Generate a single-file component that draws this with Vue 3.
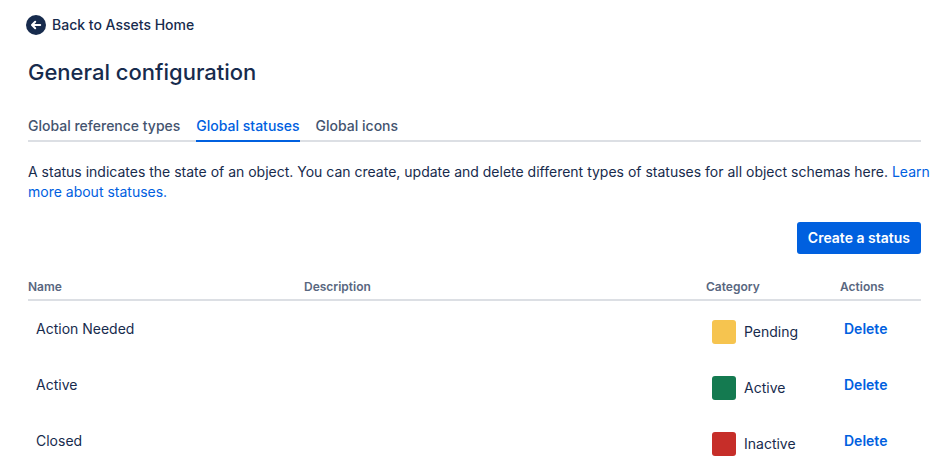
<script setup>
import { ref } from 'vue'

const tabs = ['Global reference types', 'Global statuses', 'Global icons']
const activeTab = ref('Global statuses')

const statuses = ref([
  { name: 'Action Needed', description: '', category: 'Pending' },
  { name: 'Active', description: '', category: 'Active' },
  { name: 'Closed', description: '', category: 'Inactive' }
])

function removeStatus(index) {
  statuses.value.splice(index, 1)
}
</script>

<template>
  <main class="page">
    <a class="back" href="#">
      <svg class="back-icon" width="20" height="20" viewBox="0 0 20 20" aria-hidden="true">
        <circle cx="10" cy="10" r="10" fill="#172b4d" />
        <path
          d="M14.2 10H6.2M9.2 6.8L6 10l3.2 3.2"
          fill="none"
          stroke="#fff"
          stroke-width="2"
          stroke-linecap="round"
          stroke-linejoin="round"
        />
      </svg>
      <span>Back to Assets Home</span>
    </a>

    <h1>General configuration</h1>

    <div class="tabs" role="tablist">
      <button
        v-for="tab in tabs"
        :key="tab"
        class="tab"
        :class="{ active: tab === activeTab }"
        type="button"
        role="tab"
        :aria-selected="tab === activeTab"
        @click="activeTab = tab"
      >
        {{ tab }}
      </button>
    </div>

    <p class="intro">
      A status indicates the state of an object. You can create, update and delete different types
      of statuses for all object schemas here.
      <a href="#">Learn more about statuses.</a>
    </p>

    <div class="toolbar">
      <button class="create" type="button">Create a status</button>
    </div>

    <table>
      <thead>
        <tr>
          <th class="col-name">Name</th>
          <th class="col-description">Description</th>
          <th class="col-category">Category</th>
          <th class="col-actions">Actions</th>
        </tr>
      </thead>
      <tbody>
        <tr v-for="(status, index) in statuses" :key="status.name">
          <td class="name">{{ status.name }}</td>
          <td>{{ status.description }}</td>
          <td>
            <div class="category">
              <span class="swatch" :class="status.category.toLowerCase()"></span>
              <span>{{ status.category }}</span>
            </div>
          </td>
          <td class="actions">
            <button class="delete" type="button" @click="removeStatus(index)">Delete</button>
          </td>
        </tr>
      </tbody>
    </table>
  </main>
</template>

<style>
body {
  background: #fff;
}
</style>

<style scoped>
.page {
  padding: 15px 26px 0 28px;
  font-family: Inter, "Liberation Sans", sans-serif;
  font-size: 14px;
  line-height: 20px;
  color: #172b4d;
}

a {
  color: #0060df;
  text-decoration: none;
}

button {
  font-family: inherit;
  font-size: 14px;
  line-height: 20px;
  border: none;
  background: none;
  cursor: pointer;
}

.back {
  display: flex;
  align-items: center;
  gap: 6px;
  margin-left: -2px;
  width: fit-content;
  font-weight: 500;
  color: #172b4d;
}

h1 {
  margin: 23px 0 0;
  font-size: 22px;
  line-height: 28px;
  font-weight: 500;
}

.tabs {
  display: flex;
  gap: 16px;
  margin-top: 30px;
  box-shadow: inset 0 -2px #dcdfe4;
}

.tab {
  padding: 0 0 4px;
  border-bottom: 2px solid transparent;
  font-weight: 500;
  color: #44546f;
}

.tab.active {
  color: #0060df;
  border-bottom-color: #0060df;
}

.intro {
  margin: 20px -16px 0 0;
}

.toolbar {
  display: flex;
  justify-content: flex-end;
  margin-top: 20px;
}

.create {
  padding: 6px 11px;
  border-radius: 3px;
  background: #0060df;
  color: #fff;
  font-weight: 600;
}

table {
  width: 100%;
  margin-top: 23px;
  table-layout: fixed;
  border-collapse: collapse;
}

th {
  padding: 0 0 2px;
  border-bottom: 2px solid #dcdfe4;
  font-size: 12px;
  line-height: 20px;
  font-weight: 600;
  text-align: left;
  color: #596780;
}

.col-name {
  width: 276px;
}

.col-category {
  width: 134px;
}

.col-actions {
  width: 81px;
}

td {
  height: 56px;
  padding: 0;
}

.name {
  padding-left: 8px;
}

.category {
  display: flex;
  align-items: center;
  gap: 8px;
  padding: 6px 0 0 6px;
}

.swatch {
  width: 24px;
  height: 24px;
  border-radius: 3px;
}

.swatch.pending {
  background: #f6c44f;
}

.swatch.active {
  background: #147a50;
}

.swatch.inactive {
  background: #c62e29;
}

.actions {
  padding-left: 4px;
}

.delete {
  padding: 0;
  font-weight: 600;
  color: #0060df;
}
</style>
